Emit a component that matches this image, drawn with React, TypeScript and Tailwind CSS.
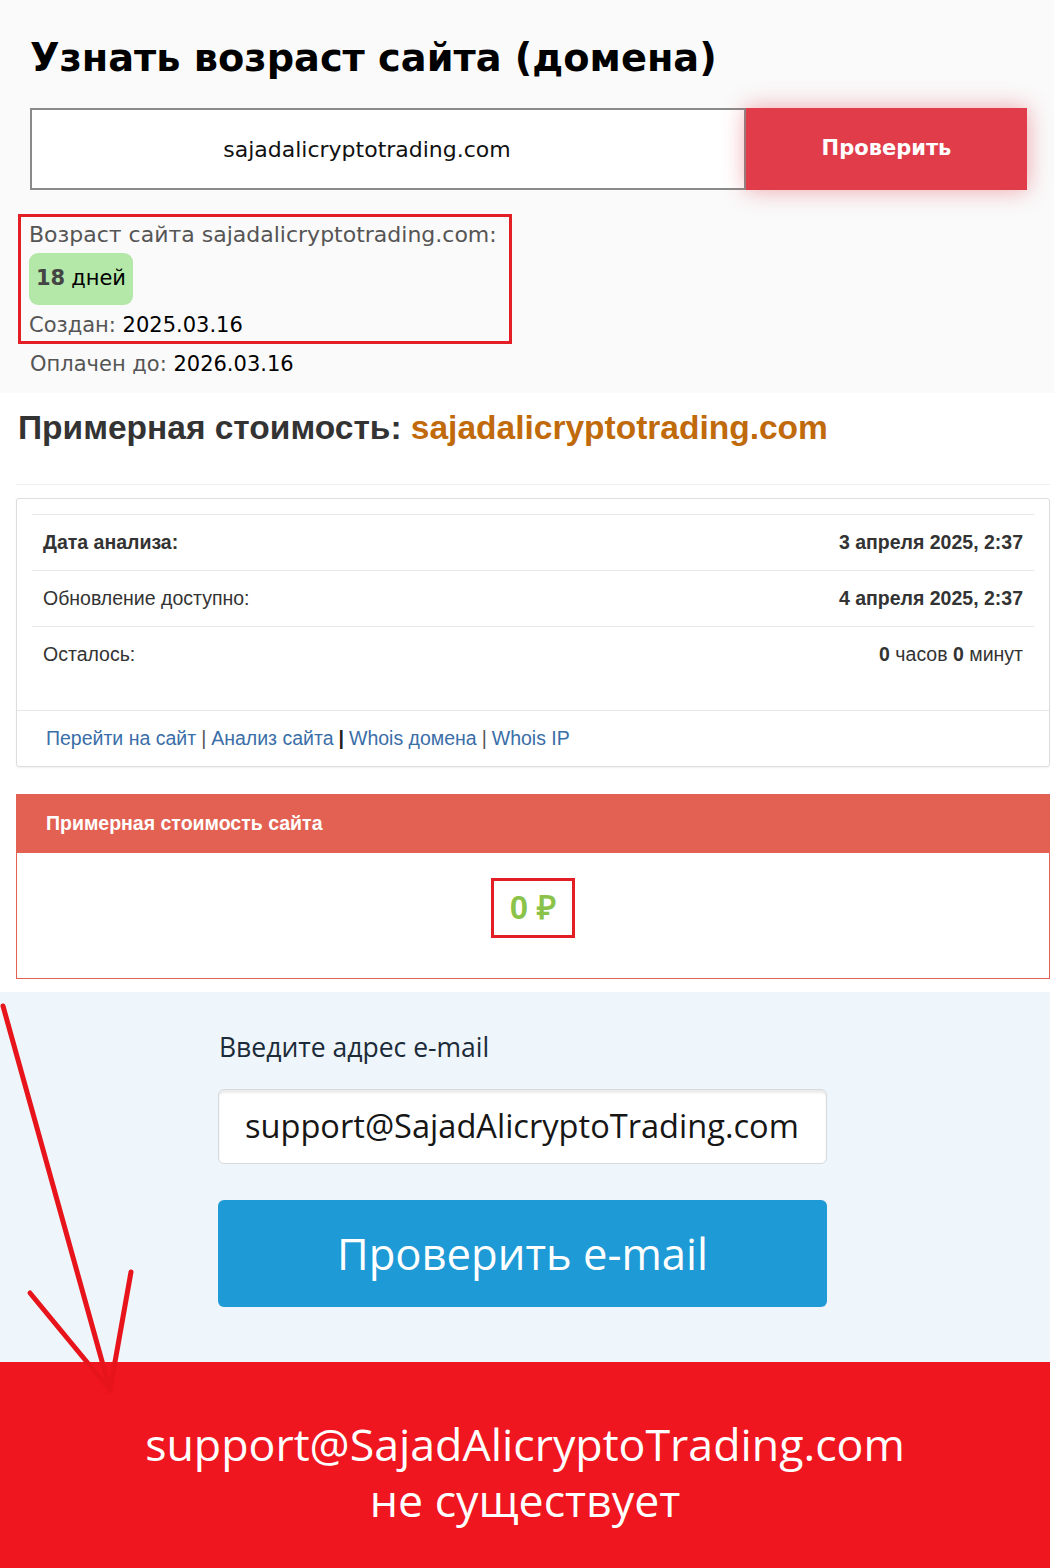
import React from "react";

const rows = [
  { label: "Дата анализа:", bold: true, value: <b>3 апреля 2025, 2:37</b> },
  { label: "Обновление доступно:", bold: false, value: <b>4 апреля 2025, 2:37</b> },
  {
    label: "Осталось:",
    bold: false,
    value: (
      <>
        <b>0</b> часов <b>0</b> минут
      </>
    ),
  },
];

function Arrow() {
  return (
    <svg
      className="pointer-events-none absolute left-0 top-0"
      width="1054"
      height="1568"
      viewBox="0 0 1054 1568"
    >
      <g stroke="#e8141c" strokeWidth="5" strokeLinecap="round" fill="none">
        <path d="M3 1006 L110 1390" />
        <path d="M30 1293 L110 1390" />
        <path d="M131 1272 L110 1390" />
      </g>
    </svg>
  );
}

export default function App() {
  return (
    <div className="relative w-[1054px] min-h-[1568px] bg-white font-['Liberation_Sans',Arial,sans-serif]">
      {/* Domain age */}
      <section className="h-[393px] bg-[#fafafa] pl-[30px] pt-[30px] font-['DejaVu_Sans','Noto_Sans',sans-serif]">
        <h1 className="text-[38.3px] font-bold leading-[56px] text-black">
          Узнать возраст сайта (домена)
        </h1>
        <div className="mt-[22px] flex h-[82px]">
          <div className="flex w-[716px] items-center justify-center border-2 border-[#8a8a8a] bg-white pr-[42px] text-[22px] text-[#111]">
            sajadalicryptotrading.com
          </div>
          <button className="w-[281px] bg-[#e03c4a] text-[21px] font-bold text-white shadow-[0_0_22px_rgba(224,60,74,0.45)]">
            Проверить
          </button>
        </div>
        <div className="-ml-[12px] mt-[24px] h-[130px] w-[494px] border-[3px] border-[#e31e24] pl-[8px] text-[#555]">
          <div className="text-[22px] leading-[36px]">Возраст сайта sajadalicryptotrading.com:</div>
          <div className="flex h-[52px] w-[104px] items-center justify-center rounded-[9px] bg-[#b4e8a9] text-[21px] text-black">
            <b className="mr-[6px] text-[#444]">18</b>дней
          </div>
          <div className="text-[21px] leading-[40px]">
            Создан: <span className="text-black">2025.03.16</span>
          </div>
        </div>
        <div className="text-[21px] leading-[40px] text-[#555]">
          Оплачен до: <span className="text-black">2026.03.16</span>
        </div>
      </section>

      {/* Site price */}
      <section className="w-[1050px] pl-[16px] pt-[15px]">
        <h2 className="pl-[2px] text-[33.5px] font-bold leading-[40px] text-[#333]">
          Примерная стоимость: <span className="text-[#c06a0c]">sajadalicryptotrading.com</span>
        </h2>
        <div className="mt-[36px] border-t border-[#eeeeee]" />
        <div className="mt-[13px] rounded-[3px] border border-[#dddddd] bg-white shadow-[0_1px_2px_rgba(0,0,0,0.06)]">
          <div className="px-[15px] pt-[15px] pb-[28px]">
            {rows.map((r) => (
              <div
                key={r.label}
                className="flex h-[56px] items-center justify-between border-t border-[#e8e8e8] px-[11px] text-[19.5px] text-[#333]"
              >
                <span className={r.bold ? "font-bold" : ""}>{r.label}</span>
                <span>{r.value}</span>
              </div>
            ))}
          </div>
          <div className="flex h-[56px] items-center border-t border-[#e8e8e8] pl-[29px] text-[19.5px] text-[#3a6ea8]">
            <span>Перейти на сайт</span>
            <span className="mx-[5px] text-[#555]">|</span>
            <span>Анализ сайта</span>
            <span className="mx-[5px] font-bold text-[#222]">|</span>
            <span>Whois домена</span>
            <span className="mx-[5px] text-[#555]">|</span>
            <span>Whois IP</span>
          </div>
        </div>

        <div className="mt-[27px] border border-[#e36152] bg-white">
          <div className="flex h-[58px] items-center bg-[#e36152] pl-[29px] text-[19.5px] font-bold text-white">
            Примерная стоимость сайта
          </div>
          <div className="flex h-[125px] items-start justify-center pt-[25px]">
            <div className="flex h-[60px] w-[84px] items-center justify-center border-[3px] border-[#e31e24] text-[33px] font-bold text-[#8bc34a]">
              0 ₽
            </div>
          </div>
        </div>
      </section>

      {/* Email check */}
      <section className="mt-[13px] h-[370px] w-[1050px] bg-[#eef6fb] pl-[218px] pt-[39px] font-['Open_Sans','Lato',sans-serif]">
        <div className="w-[609px]">
          <div className="pl-[1px] text-[26.5px] leading-[32px] text-[#1c2b39]">Введите адрес e-mail</div>
          <div className="mt-[26px] flex h-[75px] items-center rounded-[6px] border border-[#d6dade] bg-white pl-[26px] text-[32.6px] text-[#161616] shadow-[inset_0_3px_2px_rgba(0,0,0,0.08)]">
            support@SajadAlicryptoTrading.com
          </div>
          <button className="mt-[36px] flex h-[107px] w-full items-center justify-center rounded-[6px] bg-[#1e9ad6] text-[43.6px] text-white">
            Проверить e-mail
          </button>
        </div>
      </section>

      <section className="flex h-[206px] w-[1050px] flex-col items-center bg-[#ef1620] pt-[54px] font-['Open_Sans','Lato',sans-serif] text-[44.7px] leading-[56px] text-white">
        <div>support@SajadAlicryptoTrading.com</div>
        <div>не существует</div>
      </section>

      <Arrow />
    </div>
  );
}
